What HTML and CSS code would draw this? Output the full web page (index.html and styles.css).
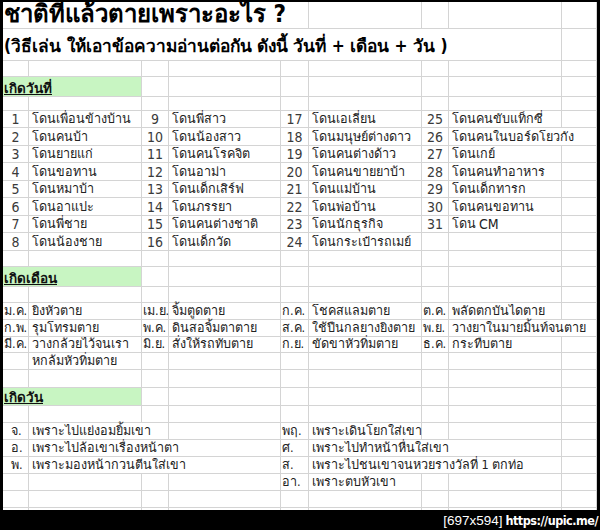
FILE: index.html
```html
<!DOCTYPE html>
<html lang="th">
<head>
<meta charset="utf-8">
<title>ชาติที่แล้วตายเพราะอะไร ?</title>
<link rel="stylesheet" href="styles.css">
</head>
<body>
<div class="frame">
  <div class="sheet">
    <div class="row r-title">
      <div class="c s5 title">ชาติที่แล้วตายเพราะอะไร ?</div>
      <div class="c"></div><div class="c"></div><div class="c"></div><div class="c"></div>
    </div>
    <div class="row r-sub">
      <div class="c s8 subtitle">(วิธีเล่น ให้เอาข้อความอ่านต่อกัน ดังนี้ วันที่ + เดือน + วัน )</div>
      <div class="c"></div>
    </div>
    <div class="row h16"><div class="c"></div><div class="c"></div><div class="c"></div><div class="c"></div><div class="c"></div><div class="c"></div><div class="c"></div><div class="c"></div><div class="c"></div></div>
    <div class="row h20">
      <div class="c s2 head">เกิดวันที่</div>
      <div class="c"></div><div class="c"></div><div class="c"></div><div class="c"></div><div class="c"></div><div class="c"></div><div class="c"></div>
    </div>
    <div class="row h14"><div class="c"></div><div class="c"></div><div class="c"></div><div class="c"></div><div class="c"></div><div class="c"></div><div class="c"></div><div class="c"></div><div class="c"></div></div>

    <div class="row h17"><div class="c num">1</div><div class="c">โดนเพื่อนข้างบ้าน</div><div class="c num">9</div><div class="c">โดนพี่สาว</div><div class="c num">17</div><div class="c">โดนเอเลี่ยน</div><div class="c num">25</div><div class="c">โดนคนขับแท็กซี่</div><div class="c"></div></div>
    <div class="row h18"><div class="c num">2</div><div class="c">โดนคนบ้า</div><div class="c num">10</div><div class="c">โดนน้องสาว</div><div class="c num">18</div><div class="c">โดนมนุษย์ต่างดาว</div><div class="c num">26</div><div class="c s2">โดนคนในบอร์ดโยวกัง</div></div>
    <div class="row h17"><div class="c num">3</div><div class="c">โดนยายแก่</div><div class="c num">11</div><div class="c">โดนคนโรคจิต</div><div class="c num">19</div><div class="c">โดนคนต่างด้าว</div><div class="c num">27</div><div class="c">โดนเกย์</div><div class="c"></div></div>
    <div class="row h18"><div class="c num">4</div><div class="c">โดนขอทาน</div><div class="c num">12</div><div class="c">โดนอาม่า</div><div class="c num">20</div><div class="c">โดนคนขายยาบ้า</div><div class="c num">28</div><div class="c">โดนคนทำอาหาร</div><div class="c"></div></div>
    <div class="row h17"><div class="c num">5</div><div class="c">โดนหมาบ้า</div><div class="c num">13</div><div class="c">โดนเด็กเสิร์ฟ</div><div class="c num">21</div><div class="c">โดนแม่บ้าน</div><div class="c num">29</div><div class="c">โดนเด็กทารก</div><div class="c"></div></div>
    <div class="row h18"><div class="c num">6</div><div class="c">โดนอาแปะ</div><div class="c num">14</div><div class="c">โดนภรรยา</div><div class="c num">22</div><div class="c">โดนพ่อบ้าน</div><div class="c num">30</div><div class="c">โดนคนขอทาน</div><div class="c"></div></div>
    <div class="row h17"><div class="c num">7</div><div class="c">โดนพี่ชาย</div><div class="c num">15</div><div class="c">โดนคนต่างชาติ</div><div class="c num">23</div><div class="c">โดนนักธุรกิจ</div><div class="c num">31</div><div class="c">โดน <span class="lat">CM</span></div><div class="c"></div></div>
    <div class="row h18"><div class="c num">8</div><div class="c">โดนน้องชาย</div><div class="c num">16</div><div class="c">โดนเด็กวัด</div><div class="c num">24</div><div class="c">โดนกระเป๋ารถเมย์</div><div class="c"></div><div class="c"></div><div class="c"></div></div>

    <div class="row h16"><div class="c"></div><div class="c"></div><div class="c"></div><div class="c"></div><div class="c"></div><div class="c"></div><div class="c"></div><div class="c"></div><div class="c"></div></div>
    <div class="row h20">
      <div class="c s2 head">เกิดเดือน</div>
      <div class="c"></div><div class="c"></div><div class="c"></div><div class="c"></div><div class="c"></div><div class="c"></div><div class="c"></div>
    </div>
    <div class="row h16"><div class="c"></div><div class="c"></div><div class="c"></div><div class="c"></div><div class="c"></div><div class="c"></div><div class="c"></div><div class="c"></div><div class="c"></div></div>

    <div class="row h17"><div class="c ab">ม.ค.</div><div class="c">ยิงหัวตาย</div><div class="c ab">เม.ย.</div><div class="c">จิ้มตูดตาย</div><div class="c ab">ก.ค.</div><div class="c">โชคสแลมตาย</div><div class="c ab">ต.ค.</div><div class="c">พลัดตกบันไดตาย</div><div class="c"></div></div>
    <div class="row h17"><div class="c ab">ก.พ.</div><div class="c">รุมโทรมตาย</div><div class="c ab">พ.ค.</div><div class="c">ดินสอจิ้มตาตาย</div><div class="c ab">ส.ค.</div><div class="c">ใช้ปืนกลยางยิงตาย</div><div class="c ab">พ.ย.</div><div class="c s2">วางยาในมายมิ้นท์จนตาย</div></div>
    <div class="row h16"><div class="c ab">มี.ค.</div><div class="c">วางกล้วยไว้จนเรา</div><div class="c ab">มิ.ย.</div><div class="c">สั่งให้รถทับตาย</div><div class="c ab">ก.ย.</div><div class="c">ขัดขาหัวทิ่มตาย</div><div class="c ab">ธ.ค.</div><div class="c">กระทืบตาย</div><div class="c"></div></div>
    <div class="row h17"><div class="c"></div><div class="c">หกล้มหัวทิ่มตาย</div><div class="c"></div><div class="c"></div><div class="c"></div><div class="c"></div><div class="c"></div><div class="c"></div><div class="c"></div></div>

    <div class="row h18"><div class="c"></div><div class="c"></div><div class="c"></div><div class="c"></div><div class="c"></div><div class="c"></div><div class="c"></div><div class="c"></div><div class="c"></div></div>
    <div class="row h18">
      <div class="c s2 head">เกิดวัน</div>
      <div class="c"></div><div class="c"></div><div class="c"></div><div class="c"></div><div class="c"></div><div class="c"></div><div class="c"></div>
    </div>
    <div class="row h17"><div class="c"></div><div class="c"></div><div class="c"></div><div class="c"></div><div class="c"></div><div class="c"></div><div class="c"></div><div class="c"></div><div class="c"></div></div>

    <div class="row h17"><div class="c day">จ.</div><div class="c s2">เพราะไปแย่งอมยิ้มเขา</div><div class="c"></div><div class="c ab">พฤ.</div><div class="c">เพราะเดินโยกใส่เขา</div><div class="c"></div><div class="c"></div><div class="c"></div></div>
    <div class="row h17"><div class="c day">อ.</div><div class="c s3">เพราะไปล้อเขาเรื่องหน้าตา</div><div class="c ab">ศ.</div><div class="c s3">เพราะไปทำหน้าหื่นใส่เขา</div><div class="c"></div></div>
    <div class="row h17"><div class="c day">พ.</div><div class="c s3">เพราะมองหน้ากวนตีนใส่เขา</div><div class="c ab">ส.</div><div class="c s3">เพราะไปชนเขาจนหวยรางวัลที่ 1 ตกท่อ</div><div class="c"></div></div>
    <div class="row h17"><div class="c"></div><div class="c"></div><div class="c"></div><div class="c"></div><div class="c ab">อา.</div><div class="c">เพราะตบหัวเขา</div><div class="c"></div><div class="c"></div><div class="c"></div></div>
    <div class="row h17"><div class="c"></div><div class="c"></div><div class="c"></div><div class="c"></div><div class="c"></div><div class="c"></div><div class="c"></div><div class="c"></div><div class="c"></div></div>
    <div class="row h2"><div class="c"></div><div class="c"></div><div class="c"></div><div class="c"></div><div class="c"></div><div class="c"></div><div class="c"></div><div class="c"></div><div class="c"></div></div>
  </div>
  <div class="footer"><span class="dim">[697x594]</span><span class="url">https://upic.me/</span></div>
</div>
</body>
</html>
```

FILE: styles.css
```css
html, body {
  margin: 0;
  padding: 0;
  background: #000;
}
body {
  width: 600px;
  height: 530px;
  overflow: hidden;
  font-family: "DejaVu Sans Condensed", "DejaVu Sans", "Noto Sans", sans-serif;
  color: #222;
}
.frame {
  padding: 2px 3px 0 3px;
  background: #000;
}
.sheet {
  width: 594px;
  background: #fff;
}
.row {
  display: grid;
  grid-template-columns: 26px 113px 27px 112px 28px 113px 27px 113px 35px;
  box-sizing: border-box;
}
.c {
  box-sizing: border-box;
  border-right: 1px solid #d4d4d4;
  border-bottom: 1px solid #d4d4d4;
  display: flex;
  align-items: flex-end;
  padding: 0 0 1px 3px;
  white-space: nowrap;
  font-size: 12.6px;
  line-height: 14px;
  overflow: visible;
}
.s2 { grid-column: span 2; }
.s3 { grid-column: span 3; }
.s5 { grid-column: span 5; }
.s8 { grid-column: span 8; }

.r-title { height: 27px; }
.r-sub { height: 32px; }
.h2 { height: 2px; }
.h14 { height: 14px; }
.h16 { height: 16px; }
.h17 { height: 17px; }
.h18 { height: 18px; }
.h20 { height: 20px; }
.h2 .c { border-bottom: none; }

.title {
  font-size: 24px;
  line-height: 24px;
  font-weight: bold;
  color: #000;
  padding-left: 1px;
  padding-bottom: 2px;
}
.subtitle {
  font-size: 17.3px;
  line-height: 18px;
  font-weight: bold;
  color: #000;
  padding-left: 1px;
  padding-bottom: 5px;
}
.head {
  background: #c8f5c2;
  font-weight: bold;
  font-size: 13.5px;
  text-decoration: underline;
  padding-left: 1px;
  color: #111;
}
.num {
  justify-content: center;
  padding-left: 0;
  font-size: 14px;
  color: #3a3a3a;
}
.lat {
  font-size: 14px;
  margin-left: 3px;
}
.ab {
  padding-left: 1px;
}
.day {
  padding-left: 8px;
}
.footer {
  height: 20px;
  display: flex;
  justify-content: flex-end;
  align-items: center;
  color: #fff;
  margin-right: -3px;
  padding-right: 2px;
  font-size: 13px;
}
.dim {
  font-family: "Liberation Sans", sans-serif;
  font-size: 13.5px;
  margin-right: 3px;
}
.url {
  font-family: "DejaVu Sans Condensed", "DejaVu Sans", sans-serif;
  font-weight: bold;
  font-size: 12.5px;
  letter-spacing: -0.5px;
}
```
